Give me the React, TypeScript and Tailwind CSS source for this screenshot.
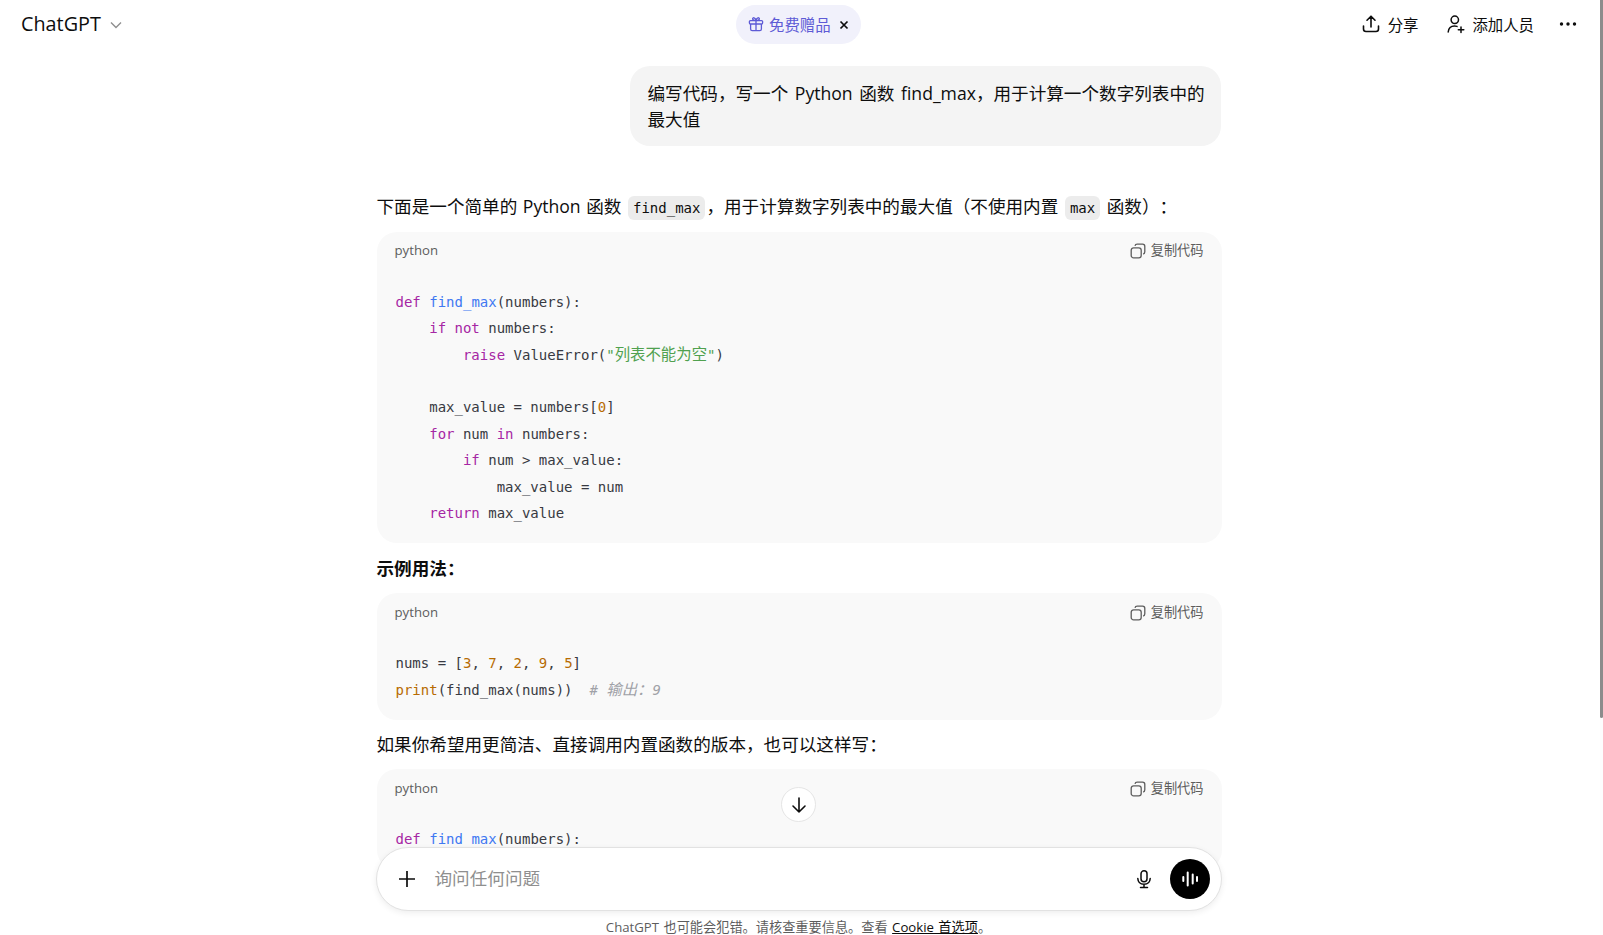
import React from "react";

const UI = '"Open Sans","Noto Sans CJK SC",sans-serif';

const K = ({ children }: { children: React.ReactNode }) => <span className="text-[#a626a4]">{children}</span>;
const F = ({ children }: { children: React.ReactNode }) => <span className="text-[#4078f2]">{children}</span>;
const N = ({ children }: { children: React.ReactNode }) => <span className="text-[#b76b01]">{children}</span>;
const S = ({ children }: { children: React.ReactNode }) => <span className="text-[#50a14f]">{children}</span>;
const C = ({ children }: { children: React.ReactNode }) => <span className="text-[#a0a1a7] italic">{children}</span>;
const Z = ({ children }: { children: React.ReactNode }) => <span className="text-[15.4px]">{children}</span>;

function CopyIcon() {
  return (
    <svg width="16" height="16" viewBox="0 0 16 16" fill="none" stroke="currentColor" strokeWidth="1.3">
      <rect x="1.2" y="4.8" width="10" height="10" rx="2.4" />
      <path d="M5 2.9 C5.2 1.8 6 1.2 7.2 1.2 H12.6 C13.9 1.2 14.8 2.1 14.8 3.4 V8.8 C14.8 10 14.2 10.8 13.2 11" />
    </svg>
  );
}

function CodeBlock({ children }: { children: React.ReactNode }) {
  return (
    <div className="rounded-[20px] bg-[#f9f9f9]">
      <div className="flex h-[39px] items-center justify-between px-[18px] text-[13.2px] text-[#5d5d5d]">
        <span>python</span>
        <span className="flex items-center gap-[5px]">
          <CopyIcon />
          复制代码
        </span>
      </div>
      <pre className="pl-[19px] pt-[18px] pb-[17px] font-['DejaVu_Sans_Mono','Noto_Sans_CJK_SC',monospace] text-[14px] leading-[26.4px] text-[#383a42] [word-spacing:0]">
        {children}
      </pre>
    </div>
  );
}

function InlineCode({ children }: { children: React.ReactNode }) {
  return (
    <code className="mx-[1px] inline-block rounded-[6px] bg-[#ececec] px-[5px] font-['DejaVu_Sans_Mono',monospace] text-[14px] leading-[24px] text-[#0d0d0d]">
      {children}
    </code>
  );
}

export default function App() {
  return (
    <div className="relative flex h-[935px] flex-col overflow-hidden bg-white pr-[6px] text-[#0d0d0d] [text-spacing-trim:space-all]" style={{ fontFamily: UI }}>
      <header className="flex h-[48px] shrink-0 items-center justify-between pl-[21px] pr-[19px]">
        <div className="flex w-[298px] items-center gap-[8px]">
          <span className="text-[19.8px] leading-none">ChatGPT</span>
          <svg width="14" height="14" viewBox="0 0 14 14" fill="none" stroke="#8f8f8f" strokeWidth="1.4" className="mt-[3px]">
            <path d="M2 4.5 L7 9.5 L12 4.5" />
          </svg>
        </div>
        <div className="flex h-[39px] w-[125px] items-center rounded-full bg-[#f1f1fb] pl-[12px] text-[15.4px] text-[#5e5bd6]">
          <svg width="16" height="16" viewBox="0 0 16 16" fill="none" stroke="currentColor" strokeWidth="1.3" className="mr-[5px]">
            <rect x="1.4" y="4.6" width="13.2" height="3.4" rx="1" />
            <path d="M2.6 8 V13 C2.6 14 3.2 14.6 4.2 14.6 H11.8 C12.8 14.6 13.4 14 13.4 13 V8 M8 4.6 V14.6 M8 4.6 C6 4.6 4.6 3.8 4.6 2.8 C4.6 1.2 7.4 1.2 8 4.6 C8.6 1.2 11.4 1.2 11.4 2.8 C11.4 3.8 10 4.6 8 4.6" />
          </svg>
          <span className="mt-[3px]">免费赠品</span>
          <svg width="10" height="10" viewBox="0 0 10 10" fill="none" stroke="#0d0d0d" strokeWidth="1.7" className="ml-[8px] mt-[1px]">
            <path d="M1.5 1.5 L8.5 8.5 M8.5 1.5 L1.5 8.5" />
          </svg>
        </div>
        <div className="flex w-[300px] items-center justify-end text-[15.4px]">
          <svg width="20" height="20" viewBox="0 0 20 20" fill="none" stroke="currentColor" strokeWidth="1.6" strokeLinecap="round" strokeLinejoin="round" className="mr-[7px]">
            <path d="M10 13 V2.5 M6 6.2 L10 2.2 L14 6.2 M2.5 12 V15 C2.5 16.6 3.4 17.5 5 17.5 H15 C16.6 17.5 17.5 16.6 17.5 15 V12" />
          </svg>
          <span className="mt-[3px]">分享</span>
          <svg width="20" height="20" viewBox="0 0 20 20" fill="none" stroke="currentColor" strokeWidth="1.5" strokeLinecap="round" className="ml-[28px] mr-[6px]">
            <circle cx="8.8" cy="5.8" r="3.7" />
            <path d="M2.2 18 C2.6 14 5 12 8.5 12 C9.5 12 10.4 12.2 11 12.4 M15 13 V18.5 M12.3 15.8 H17.8" />
          </svg>
          <span className="mt-[3px]">添加人员</span>
          <svg width="20" height="20" viewBox="0 0 20 20" fill="currentColor" className="ml-[24px]">
            <circle cx="3.5" cy="10" r="1.7" />
            <circle cx="10" cy="10" r="1.7" />
            <circle cx="16.5" cy="10" r="1.7" />
          </svg>
        </div>
      </header>

      <main className="mx-auto w-[846px] shrink-0 pl-[1px] [word-spacing:1px]">
        <div className="flex justify-end pr-[1px] pt-[18px]">
          <div className="w-[591px] rounded-[20px] bg-[#f4f4f4] pb-[13px] pl-[18px] pr-[13px] pt-[14px] text-[17.6px] leading-[26.4px] [word-spacing:2px]">
            编写代码，写一个 Python 函数 find_max，用于计算一个数字列表中的最大值
          </div>
        </div>

        <p className="mt-[46px] h-[40px] text-[17.6px] leading-[28px]">
          下面是一个简单的 Python 函数 <InlineCode>find_max</InlineCode>，用于计算数字列表中的最大值（不使用内置 <InlineCode>max</InlineCode> 函数）：
        </p>
        <CodeBlock>
          <K>def</K> <F>find_max</F>(numbers):{"\n"}
          {"    "}<K>if</K> <K>not</K> numbers:{"\n"}
          {"        "}<K>raise</K> ValueError(<S>"<Z>列表不能为空</Z>"</S>){"\n\n"}
          {"    "}max_value = numbers[<N>0</N>]{"\n"}
          {"    "}<K>for</K> num <K>in</K> numbers:{"\n"}
          {"        "}<K>if</K> num &gt; max_value:{"\n"}
          {"            "}max_value = num{"\n"}
          {"    "}<K>return</K> max_value
        </CodeBlock>

        <p className="mb-[12px] mt-[12px] text-[17.6px] font-bold leading-[26px]">示例用法：</p>
        <CodeBlock>
          nums = [<N>3</N>, <N>7</N>, <N>2</N>, <N>9</N>, <N>5</N>]{"\n"}
          <N>print</N>(find_max(nums))  <C># <Z>输出：</Z>9</C>
        </CodeBlock>

        <p className="mb-[12px] mt-[11px] text-[17.6px] leading-[26px]">如果你希望用更简洁、直接调用内置函数的版本，也可以这样写：</p>
        <CodeBlock>
          <K>def</K> <F>find_max</F>(numbers):{"\n"}
        </CodeBlock>
      </main>

      <div className="absolute bottom-0 left-0 right-[6px] flex flex-col items-center">
        <div className="mb-[25px] flex h-[35px] w-[35px] items-center justify-center rounded-full border border-[#e5e5e5] bg-white">
          <svg width="20" height="20" viewBox="0 0 20 20" fill="none" stroke="currentColor" strokeWidth="1.6" strokeLinecap="round" strokeLinejoin="round">
            <path d="M10 3 V17 M4 11 L10 17 L16 11" />
          </svg>
        </div>
        <div className="flex h-[64px] w-[846px] items-center rounded-[32px] border border-[#e2e2e2] bg-white pl-[20px] pr-[11px] shadow-[0_2px_6px_rgba(0,0,0,0.07)]">
          <svg width="20" height="20" viewBox="0 0 20 20" fill="none" stroke="currentColor" strokeWidth="1.7">
            <path d="M10 2 V18 M2 10 H18" />
          </svg>
          <span className="mb-[2px] ml-[18px] flex-1 text-[17.6px] text-[#8f8f8f]">询问任何问题</span>
          <svg width="20" height="20" viewBox="0 0 20 20" fill="none" stroke="currentColor" strokeWidth="1.5" strokeLinecap="round" className="mr-[16px]">
            <rect x="7" y="1.8" width="6" height="11" rx="3" />
            <path d="M3.8 9.5 C4 13 6.5 15.2 10 15.2 C13.5 15.2 16 13 16.2 9.5 M10 15.2 V18.4 M6.5 18.4 H13.5" />
          </svg>
          <div className="flex h-[40px] w-[40px] items-center justify-center rounded-full bg-black">
            <svg width="20" height="20" viewBox="0 0 20 20" fill="none" stroke="white" strokeWidth="2" strokeLinecap="round">
              <path d="M3.3 8 V12 M7.7 3.5 V16.5 M12.7 5.5 V14.5 M17 8 V12" />
            </svg>
          </div>
        </div>
        <div className="flex h-[24px] items-center pt-[10px] text-[13.2px] text-[#5d5d5d] [word-spacing:1px]">
          <span>
            ChatGPT 也可能会犯错。请核查重要信息。查看 <span className="text-[#0d0d0d] underline">Cookie 首选项</span>。
          </span>
        </div>
      </div>

      <div className="absolute bottom-0 right-0 top-0 w-[3px] bg-[#fdfdfd]">
        <div className="h-[718px] rounded-b-[2px] bg-[#8c8c8c]" />
      </div>
    </div>
  );
}
